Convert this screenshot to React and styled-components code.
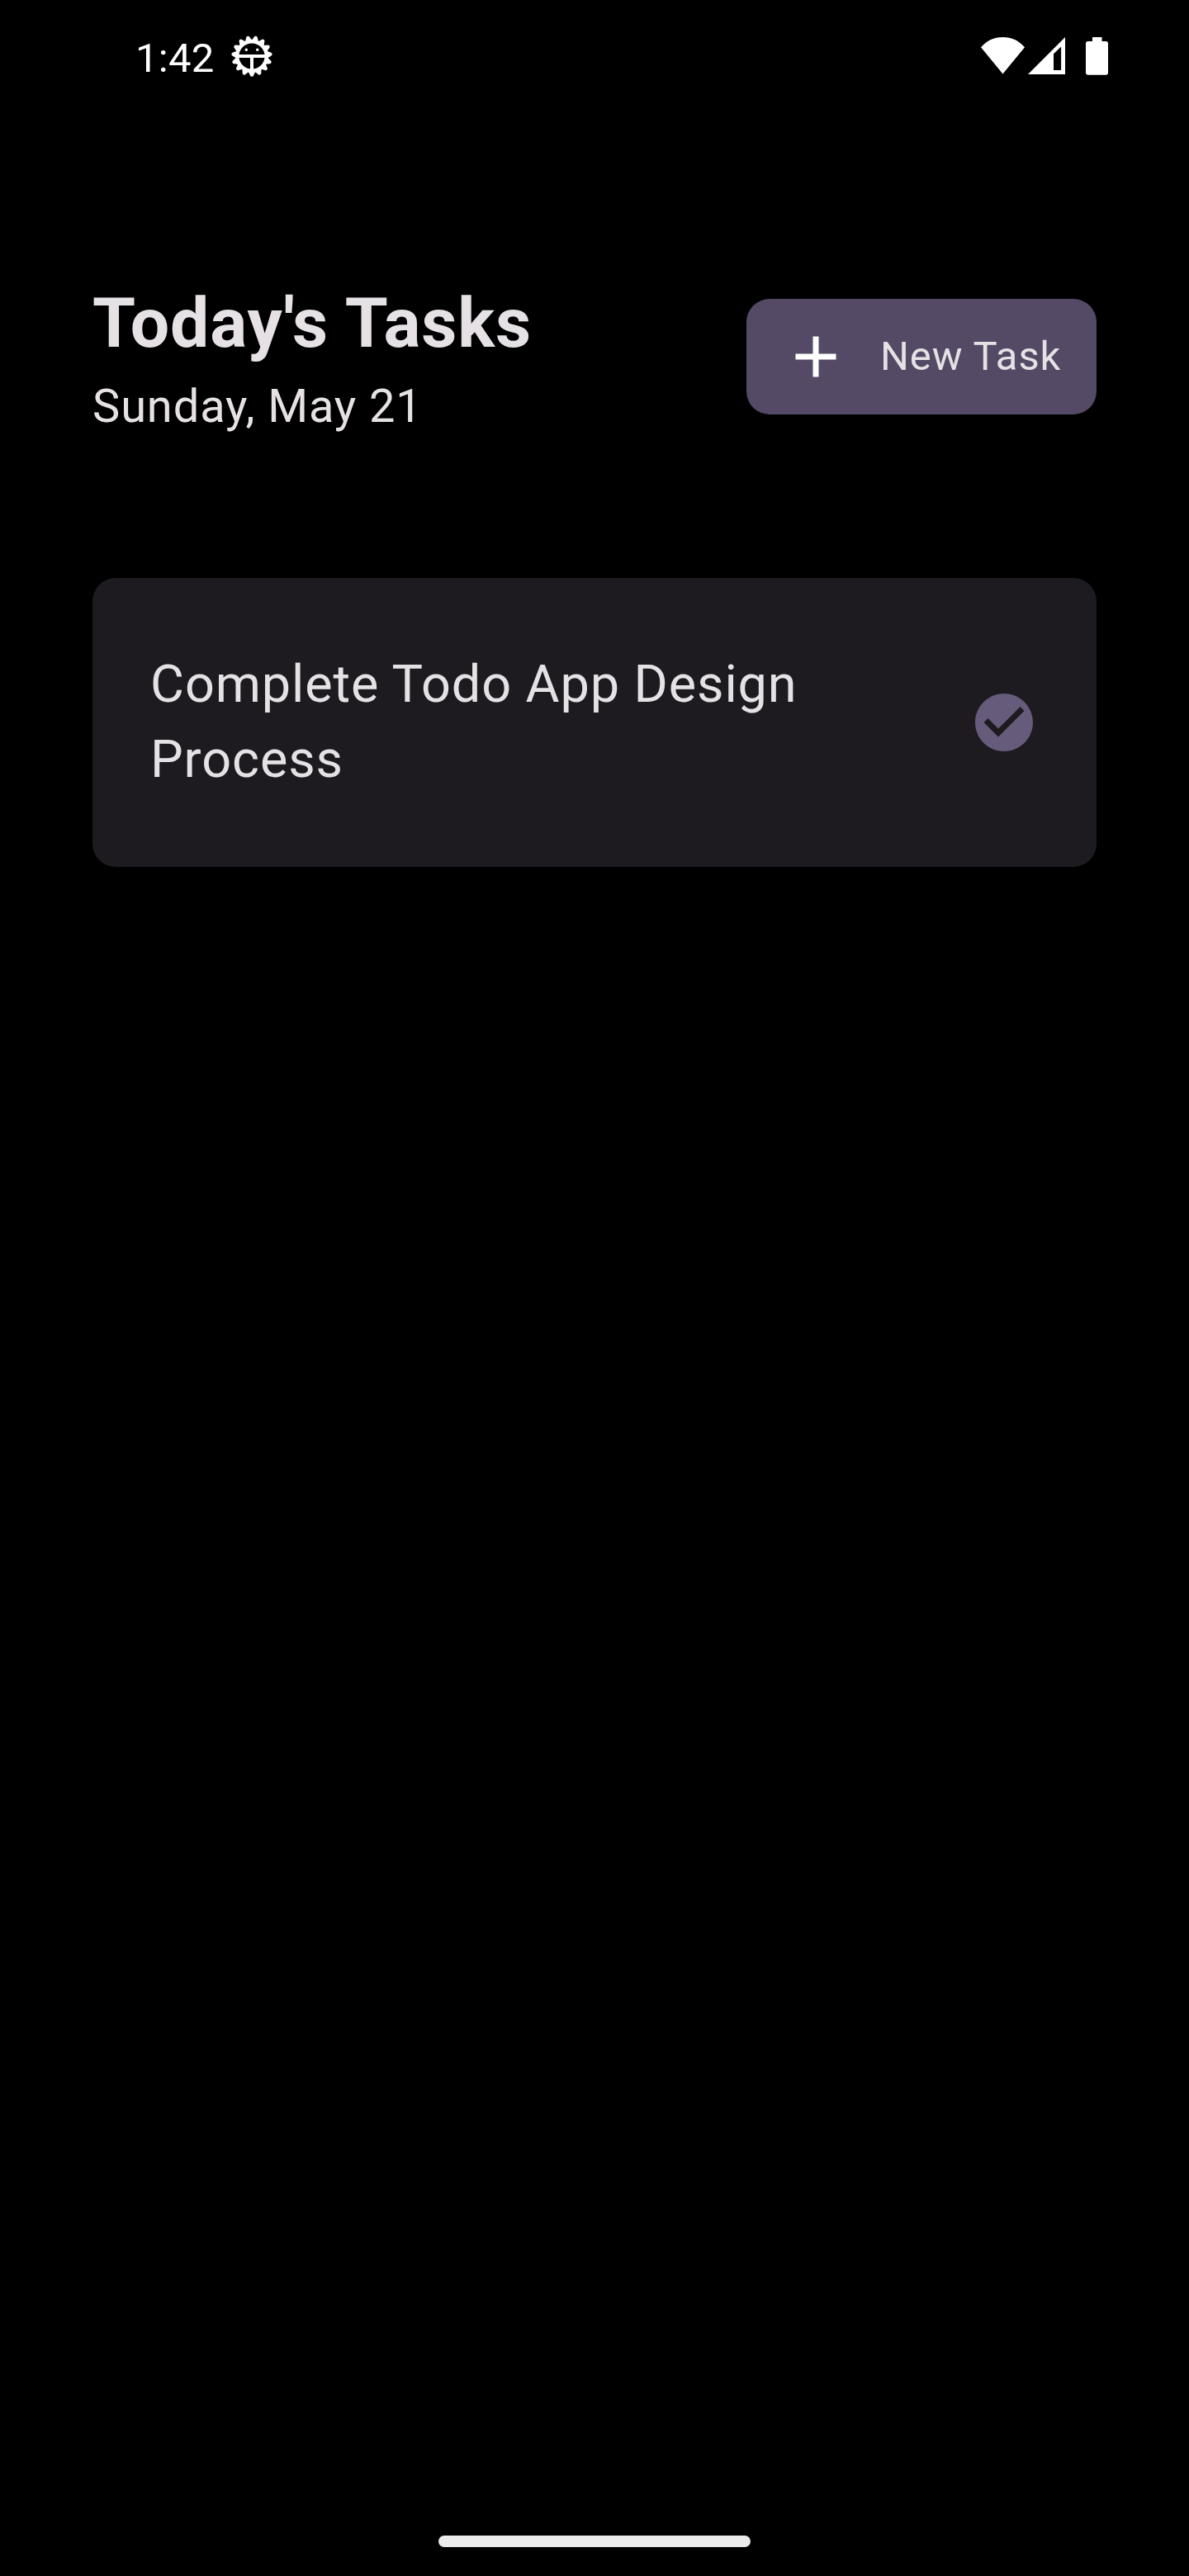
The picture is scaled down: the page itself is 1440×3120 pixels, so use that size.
import React from 'react';
import styled, { createGlobalStyle } from 'styled-components';

const GlobalStyle = createGlobalStyle`
  *, *::before, *::after { box-sizing: border-box; }
  body { margin: 0; background: #000; }
`;

const Screen = styled.div`
  display: flex;
  flex-direction: column;
  width: 1440px;
  height: 3120px;
  background: #000;
  color: #e6e1e5;
  font-family: Roboto, 'Liberation Sans', sans-serif;
`;

const StatusBar = styled.header`
  display: flex;
  align-items: center;
  justify-content: space-between;
  height: 136px;
  padding: 0 98px 0 164px;
  flex: none;
`;

const StatusGroup = styled.div`
  display: flex;
  align-items: center;
  gap: ${(p) => p.$gap || 0}px;
`;

const Clock = styled.span`
  font-size: 49px;
  line-height: 58px;
  letter-spacing: 0.3px;
  color: #fff;
  margin-top: 6px;
`;

const Glyph = styled.svg`
  display: block;
  flex: none;
  width: ${(p) => p.$w}px;
  height: ${(p) => p.$h}px;
  margin-left: ${(p) => p.$ml || 0}px;
`;

const Content = styled.main`
  display: flex;
  flex-direction: column;
  flex: 1;
  padding: 200px 112px 0;
`;

const Heading = styled.section`
  display: flex;
  justify-content: space-between;
  height: 363.5px;
  flex: none;
`;

const Title = styled.h1`
  margin: 0;
  font-size: 84px;
  line-height: 112px;
  font-weight: 700;
  letter-spacing: 0.875px;
`;

const DateLine = styled.p`
  margin: 2px 0 0;
  font-size: 56px;
  line-height: 84px;
  letter-spacing: 0.875px;
`;

const NewTaskButton = styled.button`
  display: flex;
  align-items: center;
  width: 424px;
  height: 140px;
  margin: 25.7px 0 0;
  padding: 0 0 0 42px;
  gap: 36px;
  border: 0;
  border-radius: 28px;
  background: #544a65;
  color: #e6e1e5;
  font-family: inherit;
  font-size: 49px;
  line-height: 70px;
  letter-spacing: 0.875px;
  white-space: nowrap;
`;

const TaskCard = styled.article`
  display: flex;
  align-items: center;
  justify-content: space-between;
  height: 350px;
  padding: 0 70px;
  border-radius: 28px;
  background: #1d1b20;
`;

const TaskName = styled.p`
  width: 840px;
  margin: 0 0 1px;
  font-size: 63px;
  line-height: 91px;
  letter-spacing: 0.875px;
`;

const NavigationArea = styled.footer`
  display: flex;
  justify-content: center;
  height: 49px;
  flex: none;
`;

const HomeHandle = styled.div`
  width: 378px;
  height: 14px;
  border-radius: 7px;
  background: #ebebeb;
`;

const TEETH = Array.from({ length: 15 }, (_, i) => 90 + i * 24);

function BugIcon() {
  return (
    <Glyph $w={50} $h={50} viewBox="-25 -25 50 50">
      <g fill="#fff">
        {TEETH.map((a) => (
          <path key={a} d="M17 -5L23.2 -2.1A2.2 2.2 0 0 1 23.2 2.1L17 5Z" transform={`rotate(${a})`} />
        ))}
      </g>
      <circle r="17.8" fill="none" stroke="#fff" strokeWidth="4.4" />
      <path d="M-17 0H17M0 0V17" stroke="#fff" strokeWidth="4" />
      <circle cx="-6.7" cy="-7.7" r="1.7" fill="#fff" />
      <circle cx="6.7" cy="-7.7" r="1.7" fill="#fff" />
    </Glyph>
  );
}

function WifiIcon() {
  return (
    <Glyph $w={53} $h={46} viewBox="0 0 53 46">
      <path d="M26.5 44.5L0 12.3C7 4.3 16 0.1 26.5 0.1S46 4.3 53 12.3Z" fill="#fff" />
    </Glyph>
  );
}

function SignalIcon() {
  return (
    <Glyph $w={45} $h={46} $ml={4} viewBox="0 0 45 46">
      <path d="M0 45L45 0V45ZM31 20.3V40H40.1V11.5Z" fill="#fff" fillRule="evenodd" />
    </Glyph>
  );
}

function BatteryIcon() {
  return (
    <Glyph $w={27} $h={46} $ml={25} viewBox="0 0 27 46">
      <path d="M8 0H19.5V5H24.3Q27 5 27 7.7V43Q27 45.7 24.3 45.7H2.7Q0 45.7 0 43V7.7Q0 5 2.7 5H8Z" fill="#fff" />
    </Glyph>
  );
}

function PlusIcon() {
  return (
    <Glyph $w={84} $h={84} viewBox="0 0 24 24">
      <path d="M19 13h-6v6h-2v-6H5v-2h6V5h2v6h6v2z" fill="#fff" />
    </Glyph>
  );
}

function CheckIcon() {
  return (
    <Glyph $w={84} $h={84} viewBox="0 0 24 24">
      <path
        d="M12 2C6.48 2 2 6.48 2 12s4.48 10 10 10 10-4.48 10-10S17.52 2 12 2zm-2 15l-5-5 1.41-1.41L10 14.17l7.59-7.59L19 8l-9 9z"
        fill="#665b7a"
      />
    </Glyph>
  );
}

export default function App() {
  return (
    <>
      <GlobalStyle />
      <Screen>
        <StatusBar>
          <StatusGroup $gap={20.8}>
            <Clock>1:42</Clock>
            <BugIcon />
          </StatusGroup>
          <StatusGroup>
            <WifiIcon />
            <SignalIcon />
            <BatteryIcon />
          </StatusGroup>
        </StatusBar>
        <Content>
          <Heading>
            <div>
              <Title>Today's Tasks</Title>
              <DateLine>Sunday, May 21</DateLine>
            </div>
            <NewTaskButton type="button">
              <PlusIcon />
              <span>New Task</span>
            </NewTaskButton>
          </Heading>
          <TaskCard>
            <TaskName>Complete Todo App Design Process</TaskName>
            <CheckIcon />
          </TaskCard>
        </Content>
        <NavigationArea>
          <HomeHandle />
        </NavigationArea>
      </Screen>
    </>
  );
}
